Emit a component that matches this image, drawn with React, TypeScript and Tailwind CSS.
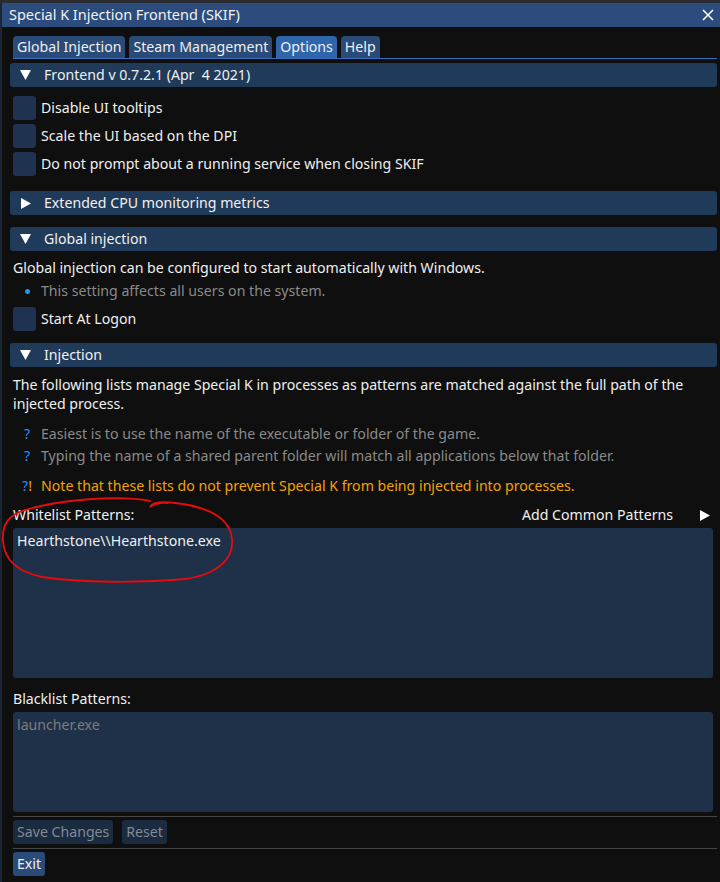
import React from "react";

const font = { fontFamily: '"Noto Sans", "Liberation Sans", sans-serif' };

function DownTri() {
  return (
    <svg width="11" height="10" viewBox="0 0 11 10" className="shrink-0">
      <polygon points="0,0 11,0 5.5,10" fill="#ffffff" />
    </svg>
  );
}
function RightTri() {
  return (
    <svg width="10" height="11" viewBox="0 0 10 11" className="shrink-0">
      <polygon points="0,0 10,5.5 0,11" fill="#ffffff" />
    </svg>
  );
}

function Header({ title, open, className }: { title: string; open: boolean; className?: string }) {
  return (
    <div
      className={
        "-ml-[3px] h-[24px] rounded-[3px] bg-[#203a59] flex items-center pl-[10px] gap-[13px] text-[#f0f0f0] " +
        (className ?? "")
      }
    >
      <div className="w-[11px] flex justify-center">{open ? <DownTri /> : <RightTri />}</div>
      <span>{title}</span>
    </div>
  );
}

function Check({ label, className }: { label: string; className?: string }) {
  return (
    <div className={"flex items-center h-[24px] gap-[5px] " + (className ?? "")}>
      <div className="w-[23px] h-[24px] rounded-[3px] bg-[#1f3350]" />
      <span className="text-[#f0f0f0]">{label}</span>
    </div>
  );
}

export default function App() {
  return (
    <div className="w-[720px] h-[882px] bg-[#0f0f0f] text-[14.15px] leading-[18px] overflow-hidden" style={font}>
      <div className="h-[3px] bg-[#2b2c31]" />
      <div className="flex h-[879px]">
        <div className="w-[2px] bg-[#1b2634]" />
        <div className="flex-1 flex flex-col min-w-0">
          <div className="h-[24px] bg-[#2c4c7d] flex items-center justify-between pl-[7px] pr-[6px] text-[#f2f2f2] text-[14.45px]">
            <span>Special K Injection Frontend (SKIF)</span>
            <svg width="12" height="12" viewBox="0 0 12 12">
              <path d="M1 1 L11 11 M11 1 L1 11" stroke="#ffffff" strokeWidth="1.6" />
            </svg>
          </div>
          <div className="relative flex-1 flex flex-col pl-[11px] pr-[3px]">
            {/* tabs */}
            <div className="mt-[9px] flex items-end gap-[4px] h-[22px] text-[#f0f0f0]">
              <div className="h-[22px] px-[4px] rounded-t-[4px] bg-[#2a4a78] flex items-center">Global Injection</div>
              <div className="h-[22px] px-[4px] rounded-t-[4px] bg-[#2a4a78] flex items-center">Steam Management</div>
              <div className="h-[22px] px-[4px] rounded-t-[4px] bg-[#2f65ab] flex items-center">Options</div>
              <div className="h-[22px] px-[4px] rounded-t-[4px] bg-[#2a4a78] flex items-center">Help</div>
            </div>
            <div className="h-[1px] bg-[#3a6fbf]" />

            <Header title="Frontend v 0.7.2.1 (Apr  4 2021)" open className="mt-[4px] whitespace-pre" />
            <Check label="Disable UI tooltips" className="mt-[9px]" />
            <Check label="Scale the UI based on the DPI" className="mt-[4px]" />
            <Check label="Do not prompt about a running service when closing SKIF" className="mt-[4px]" />

            <Header title="Extended CPU monitoring metrics" open={false} className="mt-[15px]" />
            <Header title="Global injection" open className="mt-[12px]" />
            <div className="mt-[8px] h-[18px] text-[#f0f0f0]">Global injection can be configured to start automatically with Windows.</div>
            <div className="mt-[5px] h-[18px] flex items-center text-[#8a8a8a]">
              <div className="w-[28px] flex justify-center">
                <div className="w-[5px] h-[5px] rounded-full bg-[#1e9be8]" />
              </div>
              <span>This setting affects all users on the system.</span>
            </div>
            <Check label="Start At Logon" className="mt-[7px]" />

            <Header title="Injection" open className="mt-[12px]" />
            <div className="mt-[8px] leading-[19px] text-[#f0f0f0] pr-[20px]">
              The following lists manage Special K in processes as patterns are matched against the full path of the injected process.
            </div>
            <div className="mt-[12px] h-[18px] flex items-center text-[#8a8a8a]">
              <span className="w-[28px] text-center text-[#1e90ff]">?</span>
              <span>Easiest is to use the name of the executable or folder of the game.</span>
            </div>
            <div className="mt-[4px] h-[18px] flex items-center text-[#8a8a8a]">
              <span className="w-[28px] text-center text-[#1e90ff]">?</span>
              <span>Typing the name of a shared parent folder will match all applications below that folder.</span>
            </div>
            <div className="mt-[12px] h-[18px] flex items-center text-[#f2a300]">
              <span className="w-[28px] text-center">
                <span className="text-[#1e90ff]">?</span>
                <span className="text-[#f2a300]">!</span>
              </span>
              <span>Note that these lists do not prevent Special K from being injected into processes.</span>
            </div>

            <div className="mt-[11px] h-[18px] flex items-center justify-between text-[#f0f0f0]">
              <span>Whitelist Patterns:</span>
              <div className="flex items-center gap-[27px] pr-[7px]">
                <span>Add Common Patterns</span>
                <RightTri />
              </div>
            </div>
            <div className="mt-[4px] h-[150px] mr-[4px] rounded-[3px] bg-[#1f3049] px-[4px] pt-[4px] text-[#f0f0f0]">
              Hearthstone\\Hearthstone.exe
            </div>

            <div className="mt-[12px] h-[18px] flex items-center text-[#f0f0f0]">Blacklist Patterns:</div>
            <div className="mt-[4px] h-[100px] mr-[4px] rounded-[3px] bg-[#1f3049] px-[4px] pt-[4px] text-[#7d7d7d]">
              launcher.exe
            </div>

            <div className="mt-[4px] h-[1px] bg-[#444444]" />
            <div className="mt-[3px] flex gap-[9px] h-[24px]">
              <div className="h-[24px] px-[4px] rounded-[3px] bg-[#1b2b40] text-[#7f8a96] flex items-center">Save Changes</div>
              <div className="h-[24px] px-[4px] rounded-[3px] bg-[#1b2b40] text-[#7f8a96] flex items-center">Reset</div>
            </div>
            <div className="mt-[4px] h-[1px] bg-[#444444]" />
            <div className="mt-[3px] flex h-[24px]">
              <div className="h-[24px] px-[4px] rounded-[3px] bg-[#2a4a78] text-[#f0f0f0] flex items-center">Exit</div>
            </div>

            {/* red freehand annotation */}
            <svg
              className="absolute pointer-events-none"
              style={{ left: -2, top: 470 }}
              width="240"
              height="90"
              viewBox="0 0 240 90"
            >
              <path
                d="M150 4 C 120 -2, 60 2, 22 14 C 6 20, 2 30, 3 44 C 4 60, 14 74, 42 80 C 82 86, 140 86, 185 82 C 220 77, 234 60, 232 42 C 230 22, 210 10, 175 6 C 160 4, 152 6, 150 10 C 152 8, 160 5, 168 6"
                fill="none"
                stroke="#e80b0b"
                strokeWidth="1.8"
                strokeLinecap="round"
              />
            </svg>
          </div>
        </div>
      </div>
    </div>
  );
}
